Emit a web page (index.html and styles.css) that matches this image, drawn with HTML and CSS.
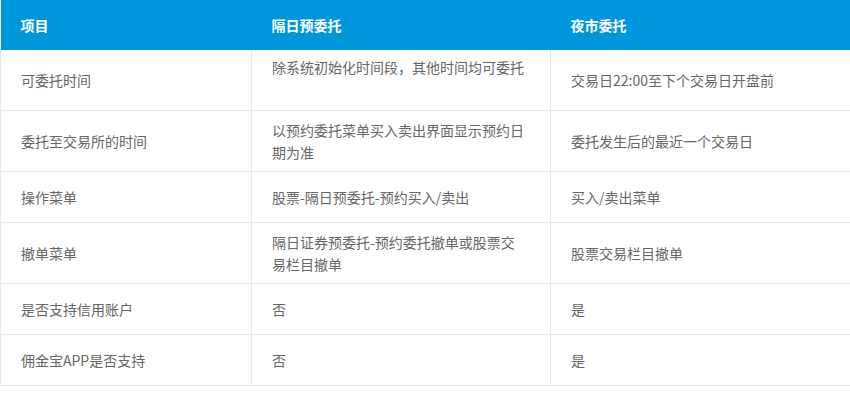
FILE: index.html
```html
<!DOCTYPE html>
<html lang="zh-CN">
<head>
<meta charset="utf-8">
<title>隔日预委托与夜市委托对比</title>
<link rel="stylesheet" href="styles.css">
</head>
<body>
<table class="cmp">
  <colgroup>
    <col class="c1"><col class="c2"><col class="c3">
  </colgroup>
  <thead>
    <tr><th>项目</th><th>隔日预委托</th><th>夜市委托</th></tr>
  </thead>
  <tbody>
    <tr class="tall"><td>可委托时间</td><td class="top">除系统初始化时间段，其他时间均可委托</td><td>交易日22:00至下个交易日开盘前</td></tr>
    <tr><td>委托至交易所的时间</td><td>以预约委托菜单买入卖出界面显示预约日期为准</td><td>委托发生后的最近一个交易日</td></tr>
    <tr><td>操作菜单</td><td>股票-隔日预委托-预约买入/卖出</td><td>买入/卖出菜单</td></tr>
    <tr><td>撤单菜单</td><td>隔日证券预委托-预约委托撤单或股票交易栏目撤单</td><td>股票交易栏目撤单</td></tr>
    <tr><td>是否支持信用账户</td><td>否</td><td>是</td></tr>
    <tr><td>佣金宝APP是否支持</td><td>否</td><td>是</td></tr>
  </tbody>
</table>
</body>
</html>
```
FILE: styles.css
```css
html, body {
  margin: 0;
  padding: 0;
  background: #fff;
}
body {
  font-family: "Noto Sans CJK SC", "Microsoft YaHei", "Noto Sans", sans-serif;
  font-size: 14px;
  color: #666;
}
.cmp {
  width: 850px;
  border-collapse: collapse;
  table-layout: fixed;
}
.c1 { width: 251px; }
.c2 { width: 299px; }
.c3 { width: 300px; }
.cmp th {
  background: #0096dc;
  color: #fff;
  font-weight: bold;
  text-align: left;
  height: 50px;
  padding: 0 20px;
  box-sizing: border-box;
  line-height: 22px;
}
.cmp td {
  border: 1px solid #e8e8e8;
  border-top: none;
  height: 34px;
  padding: 8px 26px 8px 20px;
  box-sizing: content-box;
  line-height: 22px;
  vertical-align: middle;
  word-break: break-all;
}
.cmp tr.tall td { height: 44px; }
.cmp td.top {
  vertical-align: top;
  padding-top: 6px;
  padding-bottom: 10px;
}
```
